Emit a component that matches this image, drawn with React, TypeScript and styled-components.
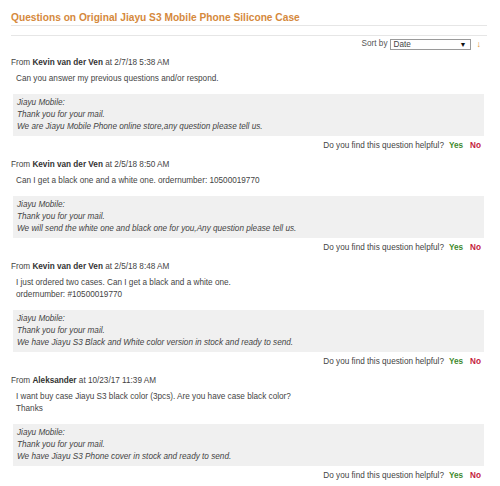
import React from 'react';
import styled, { createGlobalStyle } from 'styled-components';

interface Question {
  author: string;
  date: string;
  text: string[];
  reply: string[];
}

const questions: Question[] = [
  {
    author: 'Kevin van der Ven',
    date: '2/7/18 5:38 AM',
    text: ['Can you answer my previous questions and/or respond.'],
    reply: [
      'Jiayu Mobile:',
      'Thank you for your mail.',
      'We are Jiayu Mobile Phone online store,any question please tell us.',
    ],
  },
  {
    author: 'Kevin van der Ven',
    date: '2/5/18 8:50 AM',
    text: ['Can I get a black one and a white one. ordernumber: 10500019770'],
    reply: [
      'Jiayu Mobile:',
      'Thank you for your mail.',
      'We will send the white one and black one for you,Any question please tell us.',
    ],
  },
  {
    author: 'Kevin van der Ven',
    date: '2/5/18 8:48 AM',
    text: ['I just ordered two cases. Can I get a black and a white one.', 'ordernumber: #10500019770'],
    reply: [
      'Jiayu Mobile:',
      'Thank you for your mail.',
      'We have Jiayu S3 Black and White color version in stock and ready to send.',
    ],
  },
  {
    author: 'Aleksander',
    date: '10/23/17 11:39 AM',
    text: ['I want buy case Jiayu S3 black color (3pcs). Are you have case black color?', 'Thanks'],
    reply: [
      'Jiayu Mobile:',
      'Thank you for your mail.',
      'We have Jiayu S3 Phone cover in stock and ready to send.',
    ],
  },
];

const App: React.FC = () => {
  return (
    <>
      <GlobalStyle />
      <Page>
        <Title>Questions on Original Jiayu S3 Mobile Phone Silicone Case</Title>
        <SortBar>
          <SortLabel>Sort by</SortLabel>
          <Select>
            <span>Date</span>
            <Caret>▼</Caret>
          </Select>
          <SortArrow>↓</SortArrow>
        </SortBar>
        {questions.map((q, index) => (
          <Entry key={index}>
            <FromLine>
              From <b>{q.author}</b> at {q.date}
            </FromLine>
            <QuestionText>
              {q.text.map((line, i) => (
                <div key={i}>{line}</div>
              ))}
            </QuestionText>
            <Reply>
              {q.reply.map((line, i) => (
                <div key={i}>{line}</div>
              ))}
            </Reply>
            <Helpful>
              Do you find this question helpful?
              <Vote $yes>Yes</Vote>
              <Vote>No</Vote>
            </Helpful>
          </Entry>
        ))}
      </Page>
    </>
  );
};

export default App;

const GlobalStyle = createGlobalStyle`
  body {
    margin: 0;
    background: #fff;
    font-family: "Liberation Sans", Arial, sans-serif;
    color: #444;
  }
`;

const Page = styled.div`
  width: 476px;
  margin-left: 11px;
  font-size: 8.2px;
  line-height: 12px;
`;

const Title = styled.h2`
  margin: 0;
  padding-top: 10px;
  font-size: 10.2px;
  line-height: 15px;
  font-weight: bold;
  color: #d5893c;
  border-bottom: 1px solid #e6e6e6;
`;

const SortBar = styled.div`
  margin-top: 9px;
  border-top: 1px solid #e6e6e6;
  padding: 2px 6px 0 0;
  height: 12px;
  display: flex;
  align-items: center;
  justify-content: flex-end;
`;

const SortLabel = styled.span`
  color: #555;
  margin-right: 2px;
`;

const Select = styled.div`
  width: 73px;
  height: 9px;
  border: 1px solid #9a9a9a;
  display: flex;
  align-items: center;
  justify-content: space-between;
  padding: 0 3px;
  line-height: 9px;
  color: #444;
`;

const Caret = styled.span`
  font-size: 7px;
  color: #111;
`;

const SortArrow = styled.span`
  margin-left: 6px;
  color: #e08a2a;
  font-size: 9px;
`;

const Entry = styled.div`
  margin-top: 7px;
`;

const FromLine = styled.div`
  color: #444;

  b {
    color: #333;
  }
`;

const QuestionText = styled.div`
  margin-top: 4px;
  padding-left: 5px;
`;

const Reply = styled.div`
  margin: 9px 3px 0 2px;
  padding: 3px 4px;
  background: #f0f0f0;
  font-style: italic;
  color: #444;
`;

const Helpful = styled.div`
  margin-top: 4px;
  padding-right: 6px;
  text-align: right;
  color: #444;
`;

const Vote = styled.span<{ $yes?: boolean }>`
  margin-left: ${(p) => (p.$yes ? '5px' : '7px')};
  font-weight: bold;
  color: ${(p) => (p.$yes ? '#3f8a2e' : '#c4203c')};
`;
